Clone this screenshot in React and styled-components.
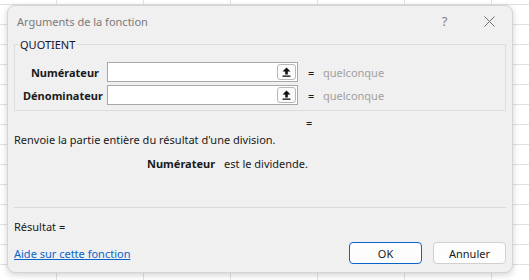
import React from 'react';
import styled, { createGlobalStyle } from 'styled-components';

const GlobalStyle = createGlobalStyle`
  html, body {
    margin: 0;
    padding: 0;
  }
  body {
    width: 529px;
    height: 280px;
    overflow: hidden;
    font-family: 'Noto Sans', 'Open Sans', sans-serif;
    background-color: #ffffff;
    background-image:
      linear-gradient(to right, #e1e1e1 1px, transparent 1px),
      linear-gradient(to bottom, #e1e1e1 1px, transparent 1px);
    background-size: 87px 20px;
    background-position: 56px 4px;
  }
`;

const Dialog = styled.div`
  box-sizing: border-box;
  margin: 5px 0 0 7px;
  width: 506px;
  height: 268px;
  background: #f0f0f0;
  border: 1px solid #d4d4d4;
  border-radius: 8px;
  box-shadow: 0 2px 6px rgba(0, 0, 0, 0.18);
  display: flex;
  flex-direction: column;
`;

const TitleBar = styled.div`
  height: 30px;
  display: flex;
  align-items: center;
  padding: 0 0 0 9px;
`;

const Title = styled.div`
  flex: 1;
  font-size: 11px;
  color: #7a7a7a;
`;

const TitleButton = styled.div`
  width: 45px;
  height: 30px;
  display: flex;
  align-items: center;
  justify-content: center;
  color: #808080;
  font-size: 13px;
`;

const Body = styled.div`
  padding: 0 6px 0 6px;
  display: flex;
  flex-direction: column;
  flex: 1;
`;

const Group = styled.fieldset`
  margin: 1px 0 0 0;
  padding: 10px 0 5px 8px;
  border: 1px solid #dcdcdc;
  border-radius: 0;
  display: flex;
  flex-direction: column;
  gap: 3px;
`;

const Legend = styled.legend`
  padding: 0 1px;
  margin-left: -4px;
  font-size: 11px;
  color: #141432;
`;

const ArgRow = styled.div`
  display: flex;
  align-items: center;
  height: 20px;
`;

const ArgLabel = styled.div`
  width: 76px;
  text-align: right;
  font-size: 11px;
  font-weight: 700;
  color: #1a1a1a;
  margin-right: 8px;
`;

const InputBox = styled.div`
  box-sizing: border-box;
  width: 191px;
  height: 20px;
  background: #ffffff;
  border: 1px solid #a8a8a8;
  display: flex;
  justify-content: flex-end;
  align-items: center;
  padding-right: 1px;
`;

const RefButton = styled.div`
  box-sizing: border-box;
  width: 19px;
  height: 16px;
  border: 1px solid #b8b8b8;
  border-radius: 3px;
  background: #fbfbfb;
  display: flex;
  align-items: center;
  justify-content: center;
`;

const Equals = styled.span`
  font-size: 11px;
  color: #1a1a1a;
  margin-left: 10px;
  width: 15px;
`;

const ArgValue = styled.span`
  font-size: 11px;
  color: #a0a0a0;
`;

const ResultEq = styled.div`
  font-size: 11px;
  color: #1a1a1a;
  padding-left: 292px;
  margin-top: 5px;
  height: 14px;
  line-height: 14px;
`;

const Description = styled.div`
  font-size: 11px;
  color: #1a1a1a;
  margin-top: 2px;
`;

const ArgHelp = styled.div`
  font-size: 11px;
  color: #1a1a1a;
  margin-top: 9px;
  padding-left: 133px;
  display: flex;
  gap: 9px;
`;

const Bold = styled.span`
  font-weight: 700;
`;

const Separator = styled.div`
  margin-top: auto;
  border-top: 1px solid #dadada;
  height: 0;
`;

const ResultLine = styled.div`
  font-size: 11px;
  color: #1a1a1a;
  margin-top: 11px;
`;

const Footer = styled.div`
  display: flex;
  align-items: center;
  justify-content: space-between;
  margin: 8px 0 8px 0;
`;

const HelpLink = styled.a`
  font-size: 11px;
  color: #0a64c8;
  text-decoration: underline;
`;

const Buttons = styled.div`
  display: flex;
  gap: 11px;
`;

const Button = styled.button`
  box-sizing: border-box;
  width: 73px;
  height: 22px;
  font-family: inherit;
  font-size: 11px;
  color: #1a1a1a;
  background: #fdfdfd;
  border: 1px solid ${p => (p.$primary ? '#0a64c8' : '#d0d0d0')};
  border-radius: 4px;
  padding: 0;
`;

const UpArrow = () => (
  <svg width="9" height="10" viewBox="0 0 9 10">
    <path d="M4.5 0.5 L8.5 4.5 L5.8 4.5 L5.8 7.5 L3.2 7.5 L3.2 4.5 L0.5 4.5 Z" fill="#111" />
    <rect x="0.5" y="8.5" width="8" height="1.3" fill="#111" />
  </svg>
);

const CloseIcon = () => (
  <svg width="11" height="11" viewBox="0 0 11 11">
    <path d="M0.5 0.5 L10.5 10.5 M10.5 0.5 L0.5 10.5" stroke="#707070" strokeWidth="1" />
  </svg>
);

const args = [
  { name: 'Numérateur', value: 'quelconque' },
  { name: 'Dénominateur', value: 'quelconque' },
];

export default function App() {
  return (
    <>
      <GlobalStyle />
      <Dialog>
        <TitleBar>
          <Title>Arguments de la fonction</Title>
          <TitleButton>?</TitleButton>
          <TitleButton>
            <CloseIcon />
          </TitleButton>
        </TitleBar>
        <Body>
          <Group>
            <Legend>QUOTIENT</Legend>
            {args.map(a => (
              <ArgRow key={a.name}>
                <ArgLabel>{a.name}</ArgLabel>
                <InputBox>
                  <RefButton>
                    <UpArrow />
                  </RefButton>
                </InputBox>
                <Equals>=</Equals>
                <ArgValue>{a.value}</ArgValue>
              </ArgRow>
            ))}
          </Group>
          <ResultEq>=</ResultEq>
          <Description>Renvoie la partie entière du résultat d'une division.</Description>
          <ArgHelp>
            <Bold>Numérateur</Bold>
            <span>est le dividende.</span>
          </ArgHelp>
          <Separator />
          <ResultLine>Résultat =</ResultLine>
          <Footer>
            <HelpLink href="#">Aide sur cette fonction</HelpLink>
            <Buttons>
              <Button $primary>OK</Button>
              <Button>Annuler</Button>
            </Buttons>
          </Footer>
        </Body>
      </Dialog>
    </>
  );
}
